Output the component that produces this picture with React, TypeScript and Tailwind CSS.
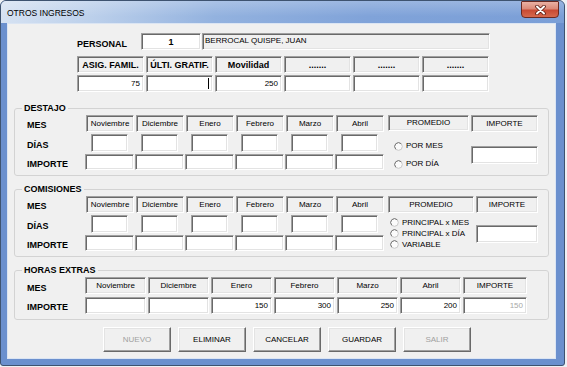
import React from "react";

const sunken =
  "border border-t-[#a0a0a0] border-l-[#a0a0a0] border-b-white border-r-white shadow-[inset_1px_1px_0_#696969,inset_-1px_-1px_0_#e3e3e3]";

function HeadCell({ w, children, bold }: { w: string; children?: React.ReactNode; bold?: boolean }) {
  return (
    <div
      className={`${w} h-[17px] ${sunken} bg-[#f0f0f0] flex items-center justify-center text-[8px] leading-[10px] ${bold ? "font-bold text-[9px]" : ""}`}
    >
      {children}
    </div>
  );
}

function Input({ w, h = "h-[17px]", children, gray }: { w: string; h?: string; children?: React.ReactNode; gray?: boolean }) {
  return (
    <div
      className={`${w} ${h} ${sunken} bg-white flex items-center justify-end pr-[3px] text-[8px] leading-[10px] ${gray ? "text-[#a8a8a8]" : "text-black"}`}
    >
      {children}
    </div>
  );
}

function Radio({ label }: { label: string }) {
  return (
    <div className="h-[12px] flex items-center gap-[3px] text-[8px] leading-[10px]">
      <svg width="9" height="9" viewBox="0 0 9 9">
        <circle cx="4.5" cy="4.5" r="3.8" fill="#fbfbfb" stroke="#c8c8c8" strokeWidth="1" />
        <path d="M1.8 7.2 A3.8 3.8 0 0 1 7.2 1.8" stroke="#7a7a7a" strokeWidth="1" fill="none" />
      </svg>
      <span>{label}</span>
    </div>
  );
}

function Legend({ children }: { children: React.ReactNode }) {
  return (
    <legend className="ml-[7px] px-[2px] text-[9px] font-bold leading-[14px]">{children}</legend>
  );
}

const months = ["Noviembre", "Diciembre", "Enero", "Febrero", "Marzo", "Abril"];

function MonthsBlock() {
  return (
    <div className="flex flex-col gap-[2px]">
      <div className="flex gap-[2px]">
        {months.map((m) => (
          <HeadCell key={m} w="w-[48px]">
            {m}
          </HeadCell>
        ))}
      </div>
      <div className="flex h-[18px]">
        {months.map((m) => (
          <div key={m} className="w-[50px] pl-[5px]">
            <Input w="w-[37px]" h="h-[18px]" />
          </div>
        ))}
      </div>
      <div className="flex gap-[1px] -ml-[1px]">
        {months.map((m) => (
          <Input key={m} w="w-[49px]" h="h-[16px]" />
        ))}
      </div>
    </div>
  );
}

function RowLabels() {
  return (
    <div className="w-[59px] flex flex-col text-[9px] font-bold leading-[11px]">
      <div className="h-[17px] pt-[5px]">MES</div>
      <div className="h-[20px] pt-[6px] mt-[2px]">DÍAS</div>
      <div className="h-[16px] pt-[5px]">IMPORTE</div>
    </div>
  );
}

function Button({ children, disabled }: { children: React.ReactNode; disabled?: boolean }) {
  return (
    <div
      className={`w-[68px] h-[25px] border border-t-white border-l-white border-b-[#696969] border-r-[#696969] shadow-[inset_-1px_-1px_0_#a0a0a0,inset_1px_1px_0_#e3e3e3] bg-[#f0f0f0] flex items-center justify-center text-[8px] leading-[10px] ${disabled ? "text-[#a0a0a0]" : "text-black"}`}
    >
      {children}
    </div>
  );
}

export default function App() {
  return (
    <div className="w-[567px] h-[367px] bg-[#eef1f5] font-['Liberation_Sans',Arial,sans-serif] text-black">
      <div className="w-[565px] h-[366px] flex flex-col rounded-t-[6px] rounded-b-[3px] border border-[#3e5370] bg-[#6b90ce] overflow-hidden">
        {/* Title bar */}
        <div className="h-[22px] shrink-0 flex items-start bg-[linear-gradient(to_bottom,rgba(255,255,255,0.22),rgba(255,255,255,0)_70%),linear-gradient(to_right,#d6e2f2_0%,#bcd0eb_16%,#93b2df_38%,#80a3d9_65%,#7b9fd7_100%)]">
          <span className="pl-[6px] pt-[7px] text-[8.5px] leading-[10px] text-black">OTROS INGRESOS</span>
          <div className="ml-auto mr-[5px] w-[38px] h-[17px] rounded-b-[4px] rounded-t-[1px] border border-[#6a2a22] bg-[linear-gradient(to_bottom,#eab1a4_0%,#dc8a78_45%,#c84a33_55%,#d5694d_100%)] flex items-center justify-center">
            <svg width="13" height="10" viewBox="0 0 13 10">
              <path d="M3 1.5 L10 8.5 M10 1.5 L3 8.5" stroke="#5a1a10" strokeWidth="3.6" strokeLinecap="round" />
              <path d="M3 1.5 L10 8.5 M10 1.5 L3 8.5" stroke="white" strokeWidth="2" strokeLinecap="round" />
            </svg>
          </div>
        </div>

        {/* Client */}
        <div className="ml-[6px] mr-[8px] mb-[6px] flex-1 border border-[#dbe5f3] bg-[#f0f0f0] flex flex-col pt-[9px]">
          {/* Personal row */}
          <div className="flex h-[17px] ml-[69px]">
            <div className="w-[64px] pt-[6px] text-[9px] font-bold leading-[11px]">PERSONAL</div>
            <div className={`w-[60px] h-[17px] ${sunken} bg-white flex items-center justify-center text-[9px] font-bold leading-[10px]`}>1</div>
            <div className={`ml-[1px] w-[288px] h-[17px] ${sunken} bg-[#f0f0f0] pl-[2px] pt-[2px] text-[8px] leading-[10px]`}>
              BERROCAL QUISPE, JUAN
            </div>
          </div>

          {/* Header row */}
          <div className="flex gap-[2px] ml-[69px] mt-[6px]">
            <HeadCell w="w-[67px]" bold>ASIG. FAMIL.</HeadCell>
            <HeadCell w="w-[67px]" bold>ÚLTI. GRATIF.</HeadCell>
            <HeadCell w="w-[67px]" bold>Movilidad</HeadCell>
            <HeadCell w="w-[67px]" bold>.......</HeadCell>
            <HeadCell w="w-[67px]" bold>.......</HeadCell>
            <HeadCell w="w-[67px]" bold>.......</HeadCell>
          </div>
          <div className="flex gap-[2px] ml-[69px] mt-[2px]">
            <Input w="w-[67px]">75</Input>
            <Input w="w-[67px]">
              <span className="w-[1px] h-[11px] bg-black" />
            </Input>
            <Input w="w-[67px]">250</Input>
            <Input w="w-[67px]" />
            <Input w="w-[67px]" />
            <Input w="w-[67px]" />
          </div>

          {/* DESTAJO */}
          <fieldset className="mx-[6px] mt-[9px] border border-[#d3d3d3] rounded-[3px] pb-[5px] min-w-0">
            <Legend>DESTAJO</Legend>
            <div className="flex pl-[12px] h-[55px]">
              <RowLabels />
              <MonthsBlock />
              <div className="ml-[2px] w-[81px] flex flex-col">
                <HeadCell w="w-[81px]">PROMEDIO</HeadCell>
                <div className="pt-[9px] pl-[6px] flex flex-col gap-[6px]">
                  <Radio label="POR MES" />
                  <Radio label="POR DÍA" />
                </div>
              </div>
              <div className="ml-[2px] w-[67px] flex flex-col">
                <HeadCell w="w-[67px]">IMPORTE</HeadCell>
                <div className="mt-[14px]">
                  <Input w="w-[67px]" h="h-[18px]" />
                </div>
              </div>
            </div>
          </fieldset>

          {/* COMISIONES */}
          <fieldset className="mx-[6px] mt-[6px] border border-[#d3d3d3] rounded-[3px] pb-[5px] min-w-0">
            <Legend>COMISIONES</Legend>
            <div className="flex pl-[12px] h-[55px]">
              <RowLabels />
              <MonthsBlock />
              <div className="ml-[2px] w-[86px] flex flex-col">
                <HeadCell w="w-[86px]">PROMEDIO</HeadCell>
                <div className="mt-[4px] h-[33px] pl-[2px] flex flex-col">
                  <Radio label="PRINCIPAL x MES" />
                  <Radio label="PRINCIPAL x DÍA" />
                  <Radio label="VARIABLE" />
                </div>
              </div>
              <div className="ml-[2px] w-[62px] flex flex-col">
                <HeadCell w="w-[62px]">IMPORTE</HeadCell>
                <div className="mt-[12px]">
                  <Input w="w-[62px]" h="h-[18px]" />
                </div>
              </div>
            </div>
          </fieldset>

          {/* HORAS EXTRAS */}
          <fieldset className="mx-[6px] mt-[6px] border border-[#d3d3d3] rounded-[3px] pb-[5px] min-w-0">
            <Legend>HORAS EXTRAS</Legend>
            <div className="flex pl-[12px] h-[37px]">
              <div className="w-[58px] flex flex-col text-[9px] font-bold leading-[11px]">
                <div className="h-[17px] pt-[6px]">MES</div>
                <div className="h-[17px] mt-[3px] pt-[5px]">IMPORTE</div>
              </div>
              <div className="flex flex-col gap-[3px]">
                <div className="flex gap-[2px]">
                  {["Noviembre", "Diciembre", "Enero", "Febrero", "Marzo", "Abril"].map((m) => (
                    <HeadCell key={m} w="w-[61px]">{m}</HeadCell>
                  ))}
                  <HeadCell w="w-[64px]">IMPORTE</HeadCell>
                </div>
                <div className="flex gap-[2px]">
                  <Input w="w-[61px]" />
                  <Input w="w-[61px]" />
                  <Input w="w-[61px]">150</Input>
                  <Input w="w-[61px]">300</Input>
                  <Input w="w-[61px]">250</Input>
                  <Input w="w-[61px]">200</Input>
                  <Input w="w-[64px]" gray>150</Input>
                </div>
              </div>
            </div>
          </fieldset>

          {/* Buttons */}
          <div className="flex gap-[7px] ml-[95px] mt-[7px]">
            <Button disabled>NUEVO</Button>
            <Button>ELIMINAR</Button>
            <Button>CANCELAR</Button>
            <Button>GUARDAR</Button>
            <Button disabled>SALIR</Button>
          </div>
        </div>
      </div>
    </div>
  );
}
